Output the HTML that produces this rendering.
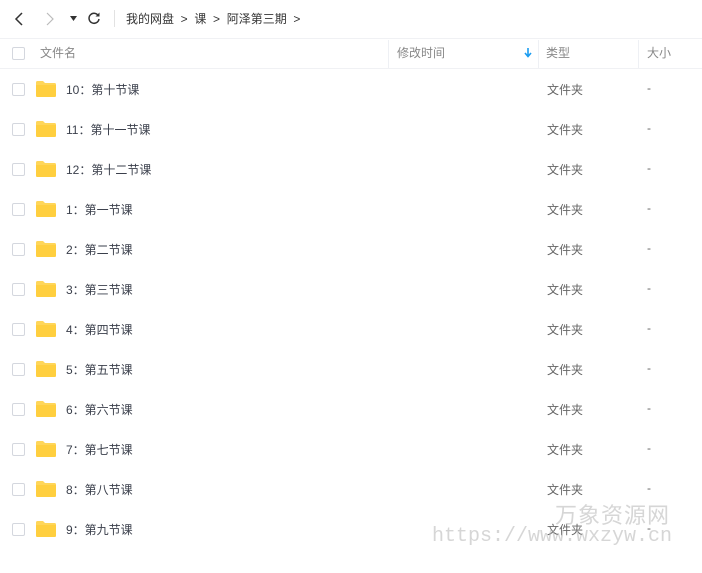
<!DOCTYPE html>
<html><head><meta charset="utf-8"><style>
*{margin:0;padding:0;box-sizing:border-box}
body{width:702px;height:573px;background:#fff;font-family:"Liberation Sans","Noto Sans CJK SC",sans-serif;font-size:12px;color:#424e67;position:relative;overflow:hidden}
.abs{position:absolute}
.cb{position:absolute;left:12px;width:13px;height:13px;border:1px solid #d4d7de;border-radius:2px;background:#fff}
.fold{position:absolute;left:36px;width:20px;height:16px}
.row{position:absolute;left:0;width:702px;height:40px}
.name{position:absolute;left:66px;top:12px;color:#3a3f4b;font-size:12px}
.type{position:absolute;left:547px;top:12px;color:#666}
.size{position:absolute;left:647px;top:12px;color:#666}
.hd{position:absolute;top:44px;color:#888;font-size:12px}
.vl{position:absolute;top:40px;width:1px;height:28px;background:#eef0f4}
</style></head><body>
<svg class="abs" style="left:14px;top:11px" width="12" height="16"><path d="M8 2 L2 8 L8 14" stroke="#333" stroke-width="1.5" fill="none"/></svg>
<svg class="abs" style="left:44px;top:11px" width="12" height="16"><path d="M3 2 L9 8 L3 14" stroke="#bbb" stroke-width="1.2" fill="none"/></svg>
<svg class="abs" style="left:70px;top:16px" width="8" height="6"><path d="M0 0 L7 0 L3.5 5Z" fill="#333"/></svg>
<svg class="abs" style="left:87px;top:11px" width="14" height="14"><path d="M11.5 5 A5 5 0 1 0 12 8" stroke="#333" stroke-width="1.5" fill="none"/><path d="M12.5 1.5 L12.5 5.5 L8.5 5.5Z" fill="#333"/></svg>
<div class="abs" style="left:114px;top:10px;width:1px;height:17px;background:#e2e2e2"></div>
<div class="abs" style="left:126px;top:10px;color:#333;font-size:12px;white-space:pre">我的网盘  &gt;  课  &gt;  阿泽第三期  &gt;</div>
<div class="abs" style="left:0;top:38px;width:702px;height:1px;background:#f0f1f4"></div>
<div class="abs" style="left:0;top:68px;width:702px;height:1px;background:#f0f1f4"></div>
<div class="cb" style="top:47px"></div>
<div class="hd" style="left:40px">文件名</div>
<div class="vl" style="left:388px"></div>
<div class="hd" style="left:397px">修改时间</div>
<svg class="abs" style="left:524px;top:48px" width="8" height="10"><path d="M4 0 V8 M1 5 L4 8.5 L7 5" stroke="#1a9cf0" stroke-width="1.6" fill="none"/></svg>
<div class="vl" style="left:538px"></div>
<div class="hd" style="left:546px">类型</div>
<div class="vl" style="left:638px"></div>
<div class="hd" style="left:647px">大小</div>
<div class="row" style="top:69px"><div class="cb" style="top:14px"></div><svg class="fold" style="top:12px" viewBox="0 0 20 16"><path d="M0 1.5 Q0 0 1.5 0 H7 L9 2 H18.5 Q20 2 20 3.5 V14.5 Q20 16 18.5 16 H1.5 Q0 16 0 14.5Z" fill="#ffd659"/><path d="M0 4 H20 V14.5 Q20 16 18.5 16 H1.5 Q0 16 0 14.5Z" fill="#ffcf3f"/></svg><div class="name">10：第十节课</div><div class="type">文件夹</div><div class="size">-</div></div>
<div class="row" style="top:109px"><div class="cb" style="top:14px"></div><svg class="fold" style="top:12px" viewBox="0 0 20 16"><path d="M0 1.5 Q0 0 1.5 0 H7 L9 2 H18.5 Q20 2 20 3.5 V14.5 Q20 16 18.5 16 H1.5 Q0 16 0 14.5Z" fill="#ffd659"/><path d="M0 4 H20 V14.5 Q20 16 18.5 16 H1.5 Q0 16 0 14.5Z" fill="#ffcf3f"/></svg><div class="name">11：第十一节课</div><div class="type">文件夹</div><div class="size">-</div></div>
<div class="row" style="top:149px"><div class="cb" style="top:14px"></div><svg class="fold" style="top:12px" viewBox="0 0 20 16"><path d="M0 1.5 Q0 0 1.5 0 H7 L9 2 H18.5 Q20 2 20 3.5 V14.5 Q20 16 18.5 16 H1.5 Q0 16 0 14.5Z" fill="#ffd659"/><path d="M0 4 H20 V14.5 Q20 16 18.5 16 H1.5 Q0 16 0 14.5Z" fill="#ffcf3f"/></svg><div class="name">12：第十二节课</div><div class="type">文件夹</div><div class="size">-</div></div>
<div class="row" style="top:189px"><div class="cb" style="top:14px"></div><svg class="fold" style="top:12px" viewBox="0 0 20 16"><path d="M0 1.5 Q0 0 1.5 0 H7 L9 2 H18.5 Q20 2 20 3.5 V14.5 Q20 16 18.5 16 H1.5 Q0 16 0 14.5Z" fill="#ffd659"/><path d="M0 4 H20 V14.5 Q20 16 18.5 16 H1.5 Q0 16 0 14.5Z" fill="#ffcf3f"/></svg><div class="name">1：第一节课</div><div class="type">文件夹</div><div class="size">-</div></div>
<div class="row" style="top:229px"><div class="cb" style="top:14px"></div><svg class="fold" style="top:12px" viewBox="0 0 20 16"><path d="M0 1.5 Q0 0 1.5 0 H7 L9 2 H18.5 Q20 2 20 3.5 V14.5 Q20 16 18.5 16 H1.5 Q0 16 0 14.5Z" fill="#ffd659"/><path d="M0 4 H20 V14.5 Q20 16 18.5 16 H1.5 Q0 16 0 14.5Z" fill="#ffcf3f"/></svg><div class="name">2：第二节课</div><div class="type">文件夹</div><div class="size">-</div></div>
<div class="row" style="top:269px"><div class="cb" style="top:14px"></div><svg class="fold" style="top:12px" viewBox="0 0 20 16"><path d="M0 1.5 Q0 0 1.5 0 H7 L9 2 H18.5 Q20 2 20 3.5 V14.5 Q20 16 18.5 16 H1.5 Q0 16 0 14.5Z" fill="#ffd659"/><path d="M0 4 H20 V14.5 Q20 16 18.5 16 H1.5 Q0 16 0 14.5Z" fill="#ffcf3f"/></svg><div class="name">3：第三节课</div><div class="type">文件夹</div><div class="size">-</div></div>
<div class="row" style="top:309px"><div class="cb" style="top:14px"></div><svg class="fold" style="top:12px" viewBox="0 0 20 16"><path d="M0 1.5 Q0 0 1.5 0 H7 L9 2 H18.5 Q20 2 20 3.5 V14.5 Q20 16 18.5 16 H1.5 Q0 16 0 14.5Z" fill="#ffd659"/><path d="M0 4 H20 V14.5 Q20 16 18.5 16 H1.5 Q0 16 0 14.5Z" fill="#ffcf3f"/></svg><div class="name">4：第四节课</div><div class="type">文件夹</div><div class="size">-</div></div>
<div class="row" style="top:349px"><div class="cb" style="top:14px"></div><svg class="fold" style="top:12px" viewBox="0 0 20 16"><path d="M0 1.5 Q0 0 1.5 0 H7 L9 2 H18.5 Q20 2 20 3.5 V14.5 Q20 16 18.5 16 H1.5 Q0 16 0 14.5Z" fill="#ffd659"/><path d="M0 4 H20 V14.5 Q20 16 18.5 16 H1.5 Q0 16 0 14.5Z" fill="#ffcf3f"/></svg><div class="name">5：第五节课</div><div class="type">文件夹</div><div class="size">-</div></div>
<div class="row" style="top:389px"><div class="cb" style="top:14px"></div><svg class="fold" style="top:12px" viewBox="0 0 20 16"><path d="M0 1.5 Q0 0 1.5 0 H7 L9 2 H18.5 Q20 2 20 3.5 V14.5 Q20 16 18.5 16 H1.5 Q0 16 0 14.5Z" fill="#ffd659"/><path d="M0 4 H20 V14.5 Q20 16 18.5 16 H1.5 Q0 16 0 14.5Z" fill="#ffcf3f"/></svg><div class="name">6：第六节课</div><div class="type">文件夹</div><div class="size">-</div></div>
<div class="row" style="top:429px"><div class="cb" style="top:14px"></div><svg class="fold" style="top:12px" viewBox="0 0 20 16"><path d="M0 1.5 Q0 0 1.5 0 H7 L9 2 H18.5 Q20 2 20 3.5 V14.5 Q20 16 18.5 16 H1.5 Q0 16 0 14.5Z" fill="#ffd659"/><path d="M0 4 H20 V14.5 Q20 16 18.5 16 H1.5 Q0 16 0 14.5Z" fill="#ffcf3f"/></svg><div class="name">7：第七节课</div><div class="type">文件夹</div><div class="size">-</div></div>
<div class="row" style="top:469px"><div class="cb" style="top:14px"></div><svg class="fold" style="top:12px" viewBox="0 0 20 16"><path d="M0 1.5 Q0 0 1.5 0 H7 L9 2 H18.5 Q20 2 20 3.5 V14.5 Q20 16 18.5 16 H1.5 Q0 16 0 14.5Z" fill="#ffd659"/><path d="M0 4 H20 V14.5 Q20 16 18.5 16 H1.5 Q0 16 0 14.5Z" fill="#ffcf3f"/></svg><div class="name">8：第八节课</div><div class="type">文件夹</div><div class="size">-</div></div>
<div class="row" style="top:509px"><div class="cb" style="top:14px"></div><svg class="fold" style="top:12px" viewBox="0 0 20 16"><path d="M0 1.5 Q0 0 1.5 0 H7 L9 2 H18.5 Q20 2 20 3.5 V14.5 Q20 16 18.5 16 H1.5 Q0 16 0 14.5Z" fill="#ffd659"/><path d="M0 4 H20 V14.5 Q20 16 18.5 16 H1.5 Q0 16 0 14.5Z" fill="#ffcf3f"/></svg><div class="name">9：第九节课</div><div class="type">文件夹</div><div class="size">-</div></div>
<div class="abs" style="left:555px;top:498px;font-size:22px;color:rgba(180,180,180,0.55);letter-spacing:1px">万象资源网</div>
<div class="abs" style="left:432px;top:525px;font-family:'Liberation Mono',monospace;font-size:20px;color:rgba(180,180,180,0.55);letter-spacing:0">https://www.wxzyw.cn</div>
</body></html>
